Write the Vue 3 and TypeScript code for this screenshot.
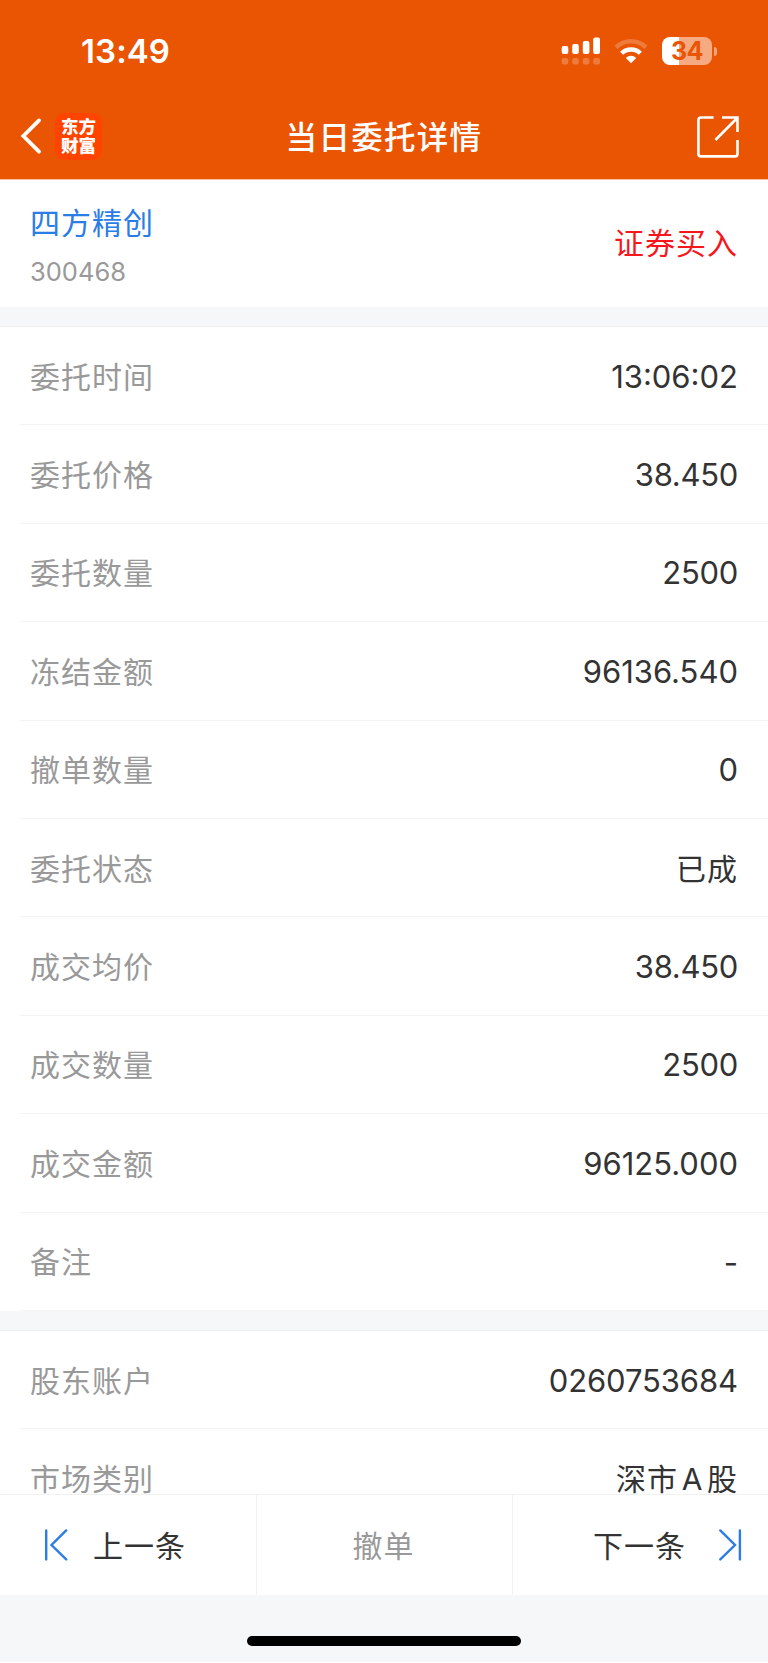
<script setup lang="ts">
interface Field {
  label: string
  value: string
  kind?: 'cjk' | 'tight' | 'account' | 'dash'
}

const orderFields: Field[] = [
  { label: '委托时间', value: '13:06:02' },
  { label: '委托价格', value: '38.450', kind: 'tight' },
  { label: '委托数量', value: '2500', kind: 'tight' },
  { label: '冻结金额', value: '96136.540' },
  { label: '撤单数量', value: '0' },
  { label: '委托状态', value: '已成', kind: 'cjk' },
  { label: '成交均价', value: '38.450', kind: 'tight' },
  { label: '成交数量', value: '2500', kind: 'tight' },
  { label: '成交金额', value: '96125.000' },
  { label: '备注', value: '-', kind: 'dash' },
]

const accountFields: Field[] = [
  { label: '股东账户', value: '0260753684', kind: 'account' },
  { label: '市场类别', value: '深市 A 股', kind: 'cjk' },
]
</script>

<template>
  <div class="screen">
    <header class="header">
      <div class="status">
        <span class="clock">13:49</span>
        <div class="indicators">
          <svg class="signal" width="40" height="28" viewBox="0 0 40 28" fill="#fff">
            <rect x="0.7" y="9" width="6.6" height="8" rx="2" />
            <rect x="11.2" y="7" width="6.6" height="10" rx="2" />
            <rect x="21.8" y="4" width="6.6" height="13" rx="2" />
            <rect x="32.2" y="0.5" width="6.8" height="16.5" rx="2" />
            <g opacity="0.22">
              <rect x="0.7" y="21" width="6.6" height="6.6" rx="2" />
              <rect x="11.2" y="21" width="6.6" height="6.6" rx="2" />
              <rect x="21.8" y="21" width="6.6" height="6.6" rx="2" />
              <rect x="32.2" y="21" width="6.8" height="6.6" rx="2" />
            </g>
          </svg>
          <svg class="wifi" width="34" height="26" viewBox="0 0 34 26" fill="none">
            <path d="M2 9.3 A21.5 21.5 0 0 1 32 9.3" stroke="#fff" stroke-opacity="0.22" stroke-width="4.4" />
            <path d="M7.6 15.3 A13.4 13.4 0 0 1 26.4 15.3" stroke="#fff" stroke-width="4.4" />
            <path d="M17 25.2 L11.8 20 A7.4 7.4 0 0 1 22.2 20 Z" fill="#fff" />
          </svg>
          <div class="battery">
            <div class="cell"><span class="level">34</span></div>
            <span class="tip"></span>
          </div>
        </div>
      </div>
      <div class="navbar">
        <div class="nav-side">
          <svg class="back" width="24" height="38" viewBox="0 0 24 38" fill="none" stroke="#fff" stroke-width="3.8" stroke-linecap="round" stroke-linejoin="miter">
            <path d="M19 3.4 L3.4 19 L19 34.6" />
          </svg>
          <div class="logo"><span>东方</span><span>财富</span></div>
        </div>
        <h1 class="title">当日委托详情</h1>
        <div class="nav-side nav-right">
          <svg width="42" height="42" viewBox="0 0 42 42" fill="none" stroke="#fff" stroke-width="2.6">
            <path d="M16.6 1.5 H4 Q1.4 1.5 1.4 4 V38 Q1.4 40.4 4 40.4 H38 Q40.5 40.4 40.5 38 V24" />
            <path d="M25 1.5 H40.5 V16 M40.2 2 L18.4 24" />
          </svg>
        </div>
      </div>
    </header>

    <main class="content">
      <section class="stock">
        <div class="stock-id">
          <div class="stock-name">四方精创</div>
          <div class="stock-code">300468</div>
        </div>
        <div class="side">证券买入</div>
      </section>
      <section class="group">
        <div v-for="f in orderFields" :key="f.label" class="row">
          <span class="label">{{ f.label }}</span>
          <span class="value" :class="f.kind">{{ f.value }}</span>
        </div>
      </section>
      <section class="group">
        <div v-for="f in accountFields" :key="f.label" class="row">
          <span class="label">{{ f.label }}</span>
          <span class="value" :class="f.kind">{{ f.value }}</span>
        </div>
      </section>
    </main>

    <nav class="actions">
      <button class="action prev">
        <svg width="24" height="32" viewBox="0 0 24 32" fill="none" stroke="#2b7de6" stroke-width="2.4" stroke-linecap="round">
          <path d="M2.2 1.4 V30.4 M22.2 1.4 L7.5 16 L22.2 30.4" />
        </svg>
        <span>上一条</span>
      </button>
      <button class="action cancel"><span>撤单</span></button>
      <button class="action next">
        <span>下一条</span>
        <svg width="24" height="32" viewBox="0 0 24 32" fill="none" stroke="#2b7de6" stroke-width="2.4" stroke-linecap="round">
          <path d="M21.9 1.4 V30.4 M2.3 1.4 L17 16 L2.3 30.4" />
        </svg>
      </button>
    </nav>
    <footer class="home"><span class="indicator"></span></footer>
  </div>
</template>

<style>
body {
  margin: 0;
  background: #fff;
}
</style>

<style scoped>
.screen {
  display: flex;
  flex-direction: column;
  width: 768px;
  height: 1663px;
  overflow: hidden;
  font-family: Inter, "Noto Sans CJK SC", sans-serif;
  color: #333;
}
.header {
  flex: none;
  box-sizing: border-box;
  height: 180px;
  background: #ea5504;
  color: #fff;
  border-bottom: 1px solid #f7bd9b;
}
.status {
  display: flex;
  justify-content: space-between;
  align-items: center;
  height: 102px;
  padding: 0 51px 0 81px;
}
.clock {
  font-size: 33px;
  font-weight: 600;
  line-height: 40px;
  letter-spacing: 0.1px;
}
.indicators {
  display: flex;
  align-items: center;
}
.signal {
  margin-right: 13px;
}
.wifi {
  margin-right: 14px;
}
.battery {
  display: flex;
  align-items: center;
  gap: 2px;
}
.cell {
  width: 50px;
  height: 28px;
  border-radius: 8px;
  background: linear-gradient(90deg, #fff 17px, #f6aa82 17px);
  text-align: center;
}
.level {
  color: #ea5504;
  font-size: 25px;
  font-weight: 700;
  line-height: 28px;
  letter-spacing: -0.5px;
}
.tip {
  width: 3px;
  height: 9px;
  border-radius: 0 4px 4px 0;
  background: #f3a27a;
}
.navbar {
  display: grid;
  grid-template-columns: 1fr auto 1fr;
  align-items: center;
  height: 68px;
}
.nav-side {
  display: flex;
  align-items: center;
  padding-left: 20px;
  gap: 11px;
}
.nav-right {
  justify-content: flex-end;
  padding: 2px 29px 0 0;
}
.logo {
  display: flex;
  flex-direction: column;
  align-items: center;
  justify-content: center;
  width: 47px;
  height: 47px;
  border-radius: 9px;
  background: #ff4400;
  font-size: 17.5px;
  font-weight: 900;
  line-height: 19px;
}
.title {
  margin: 4px 0 0;
  font-size: 31.5px;
  font-weight: 500;
  line-height: 44px;
  letter-spacing: 1.3px;
}
.content {
  flex: none;
  height: 1314px;
  overflow: hidden;
  background: #f6f7f9;
  border-radius: 6px;
}
.stock {
  display: flex;
  justify-content: space-between;
  align-items: center;
  box-sizing: border-box;
  height: 127px;
  padding: 0 30px;
  background: #fff;
}
.stock-name {
  padding-top: 3px;
  font-size: 30px;
  line-height: 44px;
  letter-spacing: 1px;
  color: #2b7de6;
}
.stock-code {
  margin-top: 9px;
  font-size: 25.5px;
  line-height: 36px;
  color: #999;
}
.side {
  padding-bottom: 6px;
  font-size: 30px;
  letter-spacing: 1px;
  color: #f6161c;
}
.group {
  margin-top: 19px;
  border-top: 1px solid #eeeeef;
  background: #fff;
}
.row {
  display: flex;
  justify-content: space-between;
  align-items: center;
  box-sizing: border-box;
  height: 98.4px;
  margin-left: 20px;
  padding: 0 30px 0 10px;
  border-bottom: 1px solid #f3f3f4;
}
.label {
  padding-top: 2px;
  font-size: 30px;
  line-height: 28px;
  letter-spacing: 1px;
  color: #999;
}
.value {
  padding-top: 2px;
  font-size: 31px;
  line-height: 30px;
}
.tight {
  letter-spacing: -0.3px;
}
.account {
  letter-spacing: -0.1px;
}
.dash {
  padding-top: 4px;
}
.cjk {
  padding-top: 2px;
  font-size: 30px;
  line-height: 28px;
  letter-spacing: 1px;
  word-spacing: -5.8px;
}
.actions {
  flex: none;
  display: grid;
  grid-template-columns: 257px 256px 255px;
  box-sizing: border-box;
  height: 101px;
  border-top: 1px solid #f1f1f2;
  background: #fff;
}
.action {
  display: flex;
  align-items: center;
  padding: 0;
  border: 0;
  border-right: 1px solid #f1f2f3;
  background: none;
  font: inherit;
  font-size: 30px;
  letter-spacing: 1px;
  color: #333;
}
.action span {
  padding-bottom: 2px;
}
.prev {
  padding-left: 44px;
  gap: 25px;
}
.cancel {
  justify-content: center;
  padding-right: 2px;
  color: #999;
}
.next {
  justify-content: flex-end;
  padding-right: 26px;
  gap: 32px;
  border-right: 0;
}
.home {
  flex: none;
  display: flex;
  justify-content: center;
  align-items: center;
  box-sizing: border-box;
  height: 67px;
  padding-top: 25px;
  background: #f5f7f9;
}
.indicator {
  width: 274px;
  height: 10px;
  border-radius: 5px;
  background: #000;
}
</style>
